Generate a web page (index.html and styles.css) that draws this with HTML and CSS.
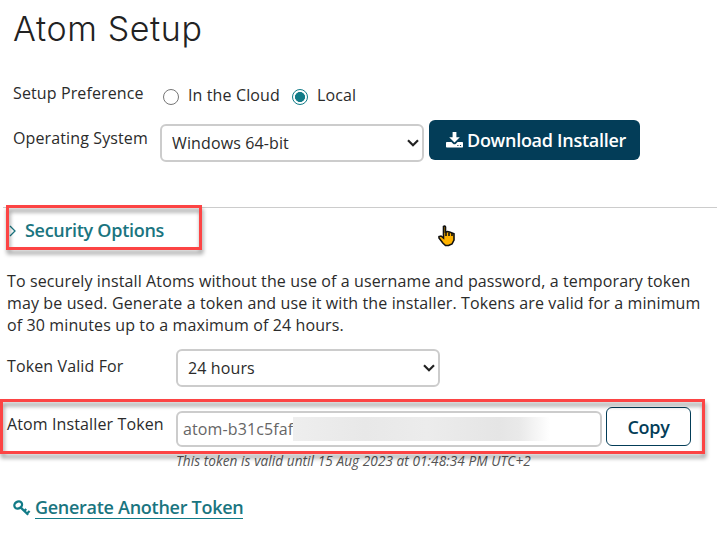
FILE: index.html
```html
<!DOCTYPE html>
<html lang="en">
<head>
<meta charset="utf-8">
<title>Atom Setup</title>
<link rel="stylesheet" href="styles.css">
</head>
<body>
<main class="page">
  <h1 class="title">Atom Setup</h1>
  <section class="setup">
    <div class="row row-preference">
      <span class="label">Setup Preference</span>
      <span class="radio"></span><span class="choice choice-cloud">In the Cloud</span>
      <span class="radio checked"></span><span class="choice">Local</span>
    </div>
    <div class="row row-os">
      <span class="label os-label">Operating System</span>
      <div class="select"><span>Windows 64-bit</span><svg class="chevron" viewBox="0 0 12 8"><path d="M1 1.3 6 6.2 11 1.3"/></svg></div>
      <button class="download"><svg class="download-icon" viewBox="0 0 17 16"><path d="M6.6 0h3.8v5.3h3.4L8.5 10.6 3.2 5.3h3.4z"/><path fill-rule="evenodd" d="M.8 10h4.6l1.7 1.7q1.4 1.2 2.8 0L11.6 10h4.6q.8 0 .8.8v4q0 .8-.8.8H.8q-.8 0-.8-.8v-4q0-.8.8-.8zm10.5 3v1.1h1.2V13zm2.6 0v1.1h1.2V13z"/></svg><span>Download Installer</span></button>
    </div>
  </section>
  <section class="security">
    <h2 class="security-title"><svg class="caret" viewBox="0 0 7 12"><path d="M1 1 6 6 1 11"/></svg><span>Security Options</span><i class="highlight highlight-title"></i></h2>
    <p class="intro">To securely install Atoms without the use of a username and password, a temporary token<br>may be used. Generate a token and use it with the installer. Tokens are valid for a minimum<br>of 30 minutes up to a maximum of 24 hours.</p>
    <div class="row row-valid">
      <span class="label valid-label">Token Valid For</span>
      <div class="select"><span>24 hours</span><svg class="chevron" viewBox="0 0 12 8"><path d="M1 1.3 6 6.2 11 1.3"/></svg></div>
    </div>
    <div class="row row-token">
      <i class="highlight highlight-token"></i>
      <span class="label token-label">Atom Installer Token</span>
      <div class="token"><span>atom-b31c5faf</span><span class="redacted"></span></div>
      <button class="copy">Copy</button>
    </div>
    <p class="note">This token is valid until 15 Aug 2023 at 01:48:34 PM UTC+2</p>
    <div class="generate"><svg class="key" viewBox="0 0 18 16"><ellipse cx="5.2" cy="5" rx="4" ry="3.4" transform="rotate(-35 5.2 5)"/><path d="M7.6 7.4 15.2 14.8M11.3 11l1.9-2M14 13.5l2.6-2.5"/></svg><a class="generate-link">Generate Another Token</a></div>
  </section>
  <svg class="pointer" viewBox="0 0 18 22"><path d="M5.5 1.5q1.5-1 2 .5v5l2-.5 2 .5 2 .7 2.5 1V15l-2 4-3.5 1.5h-3L4.8 18 1 13v-1.500l2-.5 2.500 2z"/><path d="M8 7v4M11 7.500v3.500M14 8v3"/></svg>
</main>
</body>
</html>
```
FILE: styles.css
```css
* { box-sizing: border-box; }
body { margin: 0; background: #fff; color: #2b2b2b; font: 16px/22px "Open Sans", "Noto Sans", sans-serif; letter-spacing: .12px; }
.page { position: relative; width: 717px; height: 534px; overflow: hidden; }
.title { margin: 0; padding: 9px 0 0 13px; height: 75px; font: 350 34px/40px Inter, sans-serif; letter-spacing: .6px; color: #222; white-space: nowrap; }
.setup { padding-left: 13px; height: 132px; }
.row { display: flex; align-items: flex-start; white-space: nowrap; }
.label { flex: none; }
.row-preference { height: 45px; padding-top: 9px; }
.row-preference .label { width: 150px; margin-top: -2px; }
.radio { flex: none; width: 16px; height: 16px; margin-top: 5px; border: 1px solid #767676; border-radius: 50%; }
.radio.checked { border-color: #127b87; background: radial-gradient(circle, #127b87 0 4.700px, #fff 5.300px); }
.choice { margin-left: 9px; }
.choice-cloud { width: 104px; }
.row-os .os-label { width: 147px; margin-top: 7px; }
.select { display: flex; align-items: center; justify-content: space-between; width: 264px; height: 38px; padding: 0 3px 0 10px; border: 2px solid #ccc; border-radius: 6px; }
.row-os .select { margin-top: 4px; }
.chevron { width: 12px; height: 8px; fill: none; stroke: #222; stroke-width: 2.200; }
button { font: 600 18px/22px "Open Sans", "Noto Sans", sans-serif; letter-spacing: -.28px; white-space: nowrap; }
.download { display: flex; align-items: center; width: 211px; height: 40px; margin-left: 5px; padding: 0 0 0 17px; border: 0; border-radius: 6px; background: #033d58; color: #fff; }
.download-icon { flex: none; width: 17px; height: 16px; margin-right: 4px; fill: #fff; }
.security { margin-left: 3px; padding-left: 4px; border-top: 1px solid #ccc; }
.security-title { position: relative; display: flex; align-items: center; height: 46px; margin: 0; padding: 0 0 2px 2px; font-size: 18px; font-weight: 600; letter-spacing: -.28px; color: #1a7580; }
.caret { width: 7px; height: 12px; margin: 2px 9px 0 0; fill: none; stroke: #1a7580; stroke-width: 1.300; }
.highlight { position: absolute; border: 3px solid #fc4444; filter: drop-shadow(1px 4px 2px rgba(0,0,0,.42)); pointer-events: none; }
.highlight-title { left: -1px; top: -3px; width: 196px; height: 45px; }
.intro { margin: 0; padding-top: 16px; height: 95px; white-space: nowrap; }
.valid-label, .token-label { width: 169px; margin-top: 6px; }
.row-valid { height: 58px; }
.row-token { position: relative; height: 43px; }
.highlight-token { left: -7px; top: -8px; width: 705px; height: 55px; }
.token { display: flex; align-items: center; width: 426px; height: 36px; margin-top: 4px; padding-left: 5px; border: 2px solid #ccc; border-radius: 6px; color: #666; }
.redacted { width: 257px; height: 24px; background: linear-gradient(90deg, #eee 0, #e8e8e8 28%, #ececec 52%, #e5e5e5 80%, #e9e9e9 88%, #fff); }
.copy { width: 85px; height: 39px; margin-left: 4px; padding: 0; border: 1px solid #033d58; border-radius: 6px; background: #fff; color: #033d58; }
.note { margin: 0; padding: 0 0 0 169px; height: 46px; font-size: 13.600px; font-style: italic; letter-spacing: .07px; color: #555; white-space: nowrap; }
.generate { display: flex; align-items: flex-start; padding-left: 6px; }
.key { flex: none; width: 18px; height: 16px; margin: 4px 4px 0 0; fill: none; stroke: #127b87; stroke-width: 2.300; }
.generate-link { height: 23px; border-bottom: 1px solid #127b87; color: #1a7580; font-size: 18px; font-weight: 600; line-height: 22px; letter-spacing: -.28px; white-space: nowrap; }
.pointer { position: absolute; left: 438px; top: 225px; width: 18px; height: 22px; fill: #ffb300; stroke: #111; stroke-width: 1.600; }
```
